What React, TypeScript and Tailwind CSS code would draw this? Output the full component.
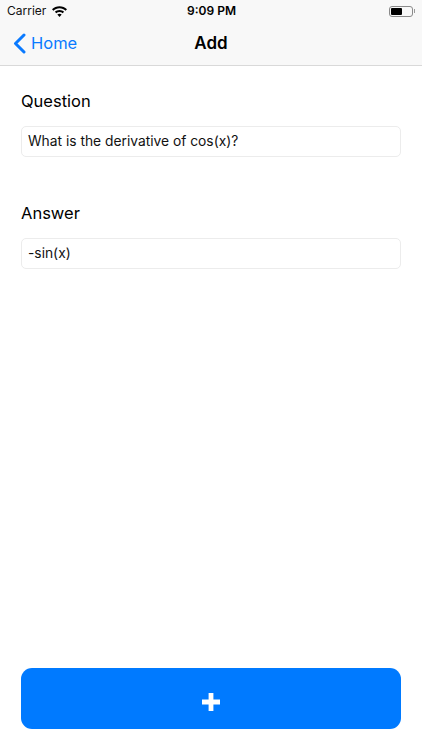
function WifiIcon() {
    return (
        <svg width="15" height="11" viewBox="0 0 15 11" fill="#000">
            <path d="M7.5 0.2 C10.4 0.2 13 1.3 15 3.2 L13.6 4.7 C12 3.2 9.9 2.3 7.5 2.3 C5.1 2.3 3 3.2 1.4 4.7 L0 3.2 C2 1.3 4.6 0.2 7.5 0.2 Z" />
            <path d="M7.5 3.9 C9.3 3.9 10.9 4.6 12.1 5.7 L10.7 7.2 C9.8 6.4 8.7 6 7.5 6 C6.3 6 5.2 6.4 4.3 7.2 L2.9 5.7 C4.1 4.6 5.7 3.9 7.5 3.9 Z" />
            <path d="M7.5 10.9 L5.3 8.5 C5.9 8 6.7 7.7 7.5 7.7 C8.3 7.7 9.1 8 9.7 8.5 Z" />
        </svg>
    )
}

function BatteryIcon() {
    return (
        <div className="flex items-center gap-[1px]">
            <div className="w-[24px] h-[11px] rounded-[3px] border border-[#8a8a8a] p-[1px]">
                <div className="w-[11px] h-full rounded-[1px] bg-black" />
            </div>
            <div className="w-[1px] h-[4px] bg-[#9a9a9a]" />
        </div>
    )
}

function Field({ label, value }: { label: string; value: string }) {
    return (
        <div className="flex flex-col">
            <div className="h-[24px] text-[16.5px] leading-[23px] text-black">{label}</div>
            <div className="mt-[12px] h-[31px] rounded-[5px] border border-[#ececec] bg-white pl-[6px] text-[13.8px] leading-[29px] text-[#111]">
                {value}
            </div>
        </div>
    )
}

export default function App() {
    return (
        <div className="w-[422px] h-[750px] bg-white flex flex-col font-['Inter',sans-serif] overflow-hidden">
            {/* Header */}
            <div className="h-[66px] bg-[#f8f8f8] border-b border-[#d9d9d9] flex flex-col">
                <div className="h-[22px] relative flex items-center justify-between pl-[7px] pr-[7px]">
                    <div className="flex items-center gap-[6px]">
                        <span className="text-[12px] text-[#111]">Carrier</span>
                        <WifiIcon />
                    </div>
                    <span className="absolute left-[1px] right-0 text-center text-[12px] font-semibold text-black">9:09 PM</span>
                    <BatteryIcon />
                </div>
                <div className="flex-1 relative flex items-center">
                    <div className="flex items-center pl-[13px] gap-[5px] text-[#0a7aff]">
                        <svg width="13" height="21" viewBox="0 0 13 21" fill="none" stroke="currentColor" strokeWidth="3" strokeLinecap="round" strokeLinejoin="round">
                            <path d="M11 2 L2.5 10.5 L11 19" />
                        </svg>
                        <span className="text-[16.5px]">Home</span>
                    </div>
                    <span className="absolute left-0 right-0 text-center text-[17px] font-semibold text-black">Add</span>
                </div>
            </div>

            {/* Form */}
            <div className="flex-1 flex flex-col px-[21px] pt-[24px] pb-[21px]">
                <div className="flex flex-col gap-[45px]">
                    <Field label="Question" value="What is the derivative of cos(x)?" />
                    <Field label="Answer" value="-sin(x)" />
                </div>
                <button className="mt-auto h-[61px] rounded-[11px] bg-[#007aff] flex items-center justify-center">
                    <svg className="mt-[6px]" width="20" height="20" viewBox="0 0 20 20" fill="#fff">
                        <path d="M7.6 1h4.8v6.6H19v4.8h-6.6V19H7.6v-6.6H1V7.6h6.6z" />
                    </svg>
                </button>
            </div>
        </div>
    )
}
